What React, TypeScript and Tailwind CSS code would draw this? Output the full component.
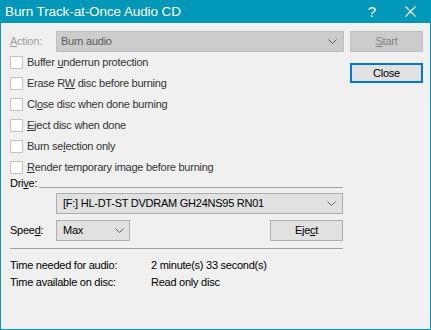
import { ReactNode } from 'react'

function Chevron() {
  return (
    <svg width="9" height="5" viewBox="0 0 9 5" className="shrink-0">
      <polyline points="0.5,0.5 4.5,4.5 8.5,0.5" fill="none" stroke="#5a5a5a" strokeWidth="1" />
    </svg>
  )
}

function Check({ children }: { children: ReactNode }) {
  return (
    <div className="flex items-center h-[21px]">
      <div className="w-[13px] h-[13px] bg-white border border-[#c4c4c4]" />
      <span className="ml-[4px] text-[#333]">{children}</span>
    </div>
  )
}

export default function App() {
  return (
    <div
      className="w-[431px] h-[330px] flex flex-col bg-[#0097b9] text-[11px] tracking-[-0.25px] text-black leading-none"
      style={{ fontFamily: '"Liberation Sans", Arial, sans-serif' }}
    >
      {/* Title bar */}
      <div className="h-[23px] flex items-center text-white">
        <span className="ml-[5px] text-[13.5px] tracking-[-0.1px]">Burn Track-at-Once Audio CD</span>
        <span className="ml-auto mr-[29px] text-[15px] tracking-normal">?</span>
        <svg width="11" height="11" viewBox="0 0 11 11" className="mr-[15px]">
          <path d="M0.5 0.5 L10.5 10.5 M10.5 0.5 L0.5 10.5" stroke="white" strokeWidth="1.2" />
        </svg>
      </div>

      <div className="flex-1 mx-[1px] mb-[1px] bg-[#f0f0f0] pl-[9px] pt-[8px]">
        <div className="flex">
          {/* left column */}
          <div className="w-[334px]">
            <div className="flex items-center h-[21px]">
              <span className="w-[46px] text-[#a0a0a0]">
                <u>A</u>ction:
              </span>
              <div className="flex-1 h-[21px] flex items-center bg-[#cccccc] border border-[#bfbfbf] pl-[4px] pr-[6px] text-[#5a5a5a]">
                <span className="flex-1">Burn audio</span>
                <Chevron />
              </div>
            </div>
            <Check>
              Buffer <u>u</u>nderrun protection
            </Check>
            <Check>
              Erase R<u>W</u> disc before burning
            </Check>
            <Check>
              Cl<u>o</u>se disc when done burning
            </Check>
            <Check>
              <u>E</u>ject disc when done
            </Check>
            <Check>
              Burn se<u>l</u>ection only
            </Check>
            <Check>
              <u>R</u>ender temporary image before burning
            </Check>
          </div>
          {/* right column */}
          <div className="ml-[6px] w-[73px] flex flex-col">
            <div className="h-[21px] flex items-center justify-center bg-[#cccccc] border border-[#bfbfbf] text-[#838383]">
              <span>
                <u>S</u>tart
              </span>
            </div>
            <div className="mt-[11px] h-[20px] flex items-center justify-center bg-[#e1e1e1] border-2 border-[#0078d7]">
              Close
            </div>
          </div>
        </div>

        {/* Drive */}
        <div className="w-[333px] flex items-end h-[11px]">
          <span>
            Dri<u>v</u>e:
          </span>
          <div className="flex-1 ml-[2px] border-b border-[#a0a0a0] mb-[1px]" />
        </div>
        <div className="ml-[46px] mt-[4px] w-[287px] h-[21px] flex items-center bg-[#e1e1e1] border border-[#adadad] pl-[6px] pr-[6px]">
          <span className="flex-1">[F:] HL-DT-ST DVDRAM GH24NS95 RN01</span>
          <Chevron />
        </div>

        {/* Speed */}
        <div className="w-[333px] mt-[6px] flex items-center h-[21px]">
          <span className="w-[46px]">
            Spee<u>d</u>:
          </span>
          <div className="w-[74px] h-[21px] flex items-center bg-[#e1e1e1] border border-[#adadad] pl-[6px] pr-[5px]">
            <span className="flex-1">Max</span>
            <Chevron />
          </div>
          <div className="ml-auto w-[73px] h-[21px] flex items-center justify-center bg-[#e1e1e1] border border-[#adadad]">
            <span>
              Eje<u>c</u>t
            </span>
          </div>
        </div>

        <div className="w-[333px] mt-[7px] border-t border-[#a0a0a0]" />

        <div className="mt-[11px] flex flex-col gap-[6px]">
          <div className="flex">
            <span className="w-[141px]">Time needed for audio:</span>
            <span>2 minute(s) 33 second(s)</span>
          </div>
          <div className="flex">
            <span className="w-[141px]">Time available on disc:</span>
            <span>Read only disc</span>
          </div>
        </div>
      </div>
    </div>
  )
}
